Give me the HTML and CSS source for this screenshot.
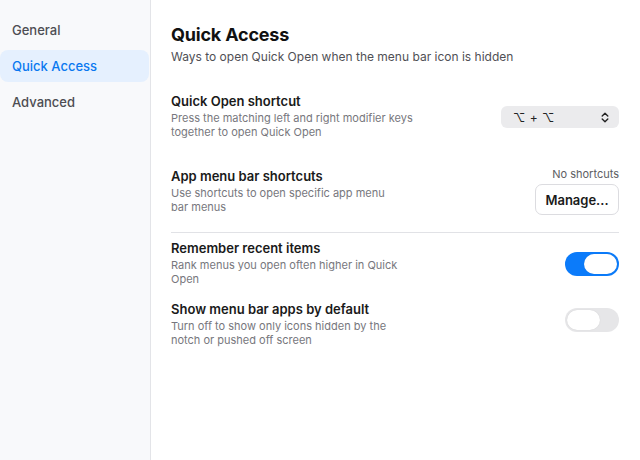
FILE: index.html
```html
<!DOCTYPE html>
<html>
<head>
<meta charset="utf-8">
<link rel="stylesheet" href="styles.css">
</head>
<body>
<div class="app">
  <nav class="sidebar">
    <div class="nav-item">General</div>
    <div class="nav-item active">Quick Access</div>
    <div class="nav-item">Advanced</div>
  </nav>
  <main class="content">
    <h1 class="title">Quick Access</h1>
    <p class="subtitle">Ways to open Quick Open when the menu bar icon is hidden</p>

    <section class="row row-first">
      <div class="text">
        <div class="label">Quick Open shortcut</div>
        <div class="desc">Press the matching left and right modifier keys together to open Quick Open</div>
      </div>
      <div class="control">
        <div class="select">
          <span class="select-value">⌥ + ⌥</span>
          <svg class="chev" width="8" height="11" viewBox="0 0 8 11"><path d="M1.2 4 L4 1.3 L6.8 4 M1.2 7 L4 9.7 L6.8 7" fill="none" stroke="#222" stroke-width="1.4" stroke-linecap="round" stroke-linejoin="round"/></svg>
        </div>
      </div>
    </section>

    <section class="row row-apps">
      <div class="text">
        <div class="label">App menu bar shortcuts</div>
        <div class="desc narrow">Use shortcuts to open specific app menu bar menus</div>
      </div>
      <div class="control stack">
        <div class="note">No shortcuts</div>
        <button class="btn">Manage...</button>
      </div>
    </section>

    <hr class="divider">

    <section class="row row-toggle">
      <div class="text">
        <div class="label">Remember recent items</div>
        <div class="desc">Rank menus you open often higher in Quick Open</div>
      </div>
      <div class="control">
        <div class="toggle on"><span class="knob"></span></div>
      </div>
    </section>

    <section class="row row-toggle2">
      <div class="text">
        <div class="label">Show menu bar apps by default</div>
        <div class="desc">Turn off to show only icons hidden by the notch or pushed off screen</div>
      </div>
      <div class="control">
        <div class="toggle"><span class="knob"></span></div>
      </div>
    </section>
  </main>
</div>
</body>
</html>
```

FILE: styles.css
```css
* { box-sizing: border-box; }
html, body {
  margin: 0;
  padding: 0;
  width: 640px;
  height: 460px;
  background: #ffffff;
  font-family: "Inter", "Liberation Sans", Arial, sans-serif;
  color: #1d1d1f;
  overflow: hidden;
}
.app {
  display: flex;
  height: 460px;
}
.sidebar {
  width: 151px;
  flex: none;
  background: #f8f9fb;
  border-right: 1px solid #e3e4e8;
  padding-top: 14px;
  display: flex;
  flex-direction: column;
  gap: 4px;
}
.nav-item {
  height: 32px;
  line-height: 32px;
  padding-left: 12px;
  font-size: 13px;
  font-weight: 500;
  color: #4d4d53;
  border-radius: 8px;
  width: 149px;
}
.nav-item.active {
  background: #e5f0fe;
  color: #0a78f0;
}
.content {
  flex: 1;
  padding: 23px 21px 0 20px;
}
.title {
  margin: 0;
  font-size: 18px;
  font-weight: 700;
  line-height: 24px;
  color: #111;
  letter-spacing: -0.2px;
}
.subtitle {
  margin: 2px 0 0;
  font-size: 12px;
  line-height: 16px;
  color: #505055;
}
.row {
  display: flex;
  justify-content: space-between;
}
.row-first { margin-top: 27px; }
.row-apps { margin-top: 28px; }
.row-toggle { margin-top: 6px; }
.row-toggle2 { margin-top: 14px; }
.text { width: 244px; }
.label {
  font-size: 13px;
  font-weight: 600;
  line-height: 18px;
  color: #1a1a1a;
}
.desc {
  margin-top: 1px;
  font-size: 11px;
  line-height: 14px;
  color: #77777d;
}
.desc.narrow { width: 225px; }
.control {
  display: flex;
  align-items: flex-start;
}
.stack {
  flex-direction: column;
  align-items: flex-end;
}
.select {
  margin-top: 14px;
  width: 118px;
  height: 22px;
  background: #ebebed;
  border-radius: 6px;
  display: flex;
  align-items: center;
  justify-content: space-between;
  padding: 0 10px 0 12px;
}
.select-value {
  font-size: 12px;
  color: #222;
  letter-spacing: 0.5px;
}
.chev { display: block; }
.note {
  font-size: 11px;
  line-height: 14px;
  color: #5d5d62;
}
.btn {
  margin-top: 3px;
  width: 84px;
  height: 31px;
  background: #fff;
  border: 1px solid #dcdce0;
  border-radius: 7px;
  font-family: inherit;
  font-size: 13px;
  font-weight: 600;
  color: #1a1a1a;
  padding: 0;
}
.divider {
  margin: 17px 0 0;
  border: 0;
  border-top: 1px solid #e1e2e6;
}
.toggle {
  width: 54px;
  height: 24px;
  border-radius: 12px;
  background: #e6e6e8;
  display: flex;
  align-items: center;
  padding: 0 2px;
}
.toggle.on {
  background: #0b7bfa;
  justify-content: flex-end;
}
.knob {
  width: 33px;
  height: 20px;
  border-radius: 10px;
  background: #fff;
  box-shadow: 0 0 1px rgba(0,0,0,0.15);
}
.row-toggle .control { padding-top: 13px; }
.row-toggle2 .control { padding-top: 8px; }
```
